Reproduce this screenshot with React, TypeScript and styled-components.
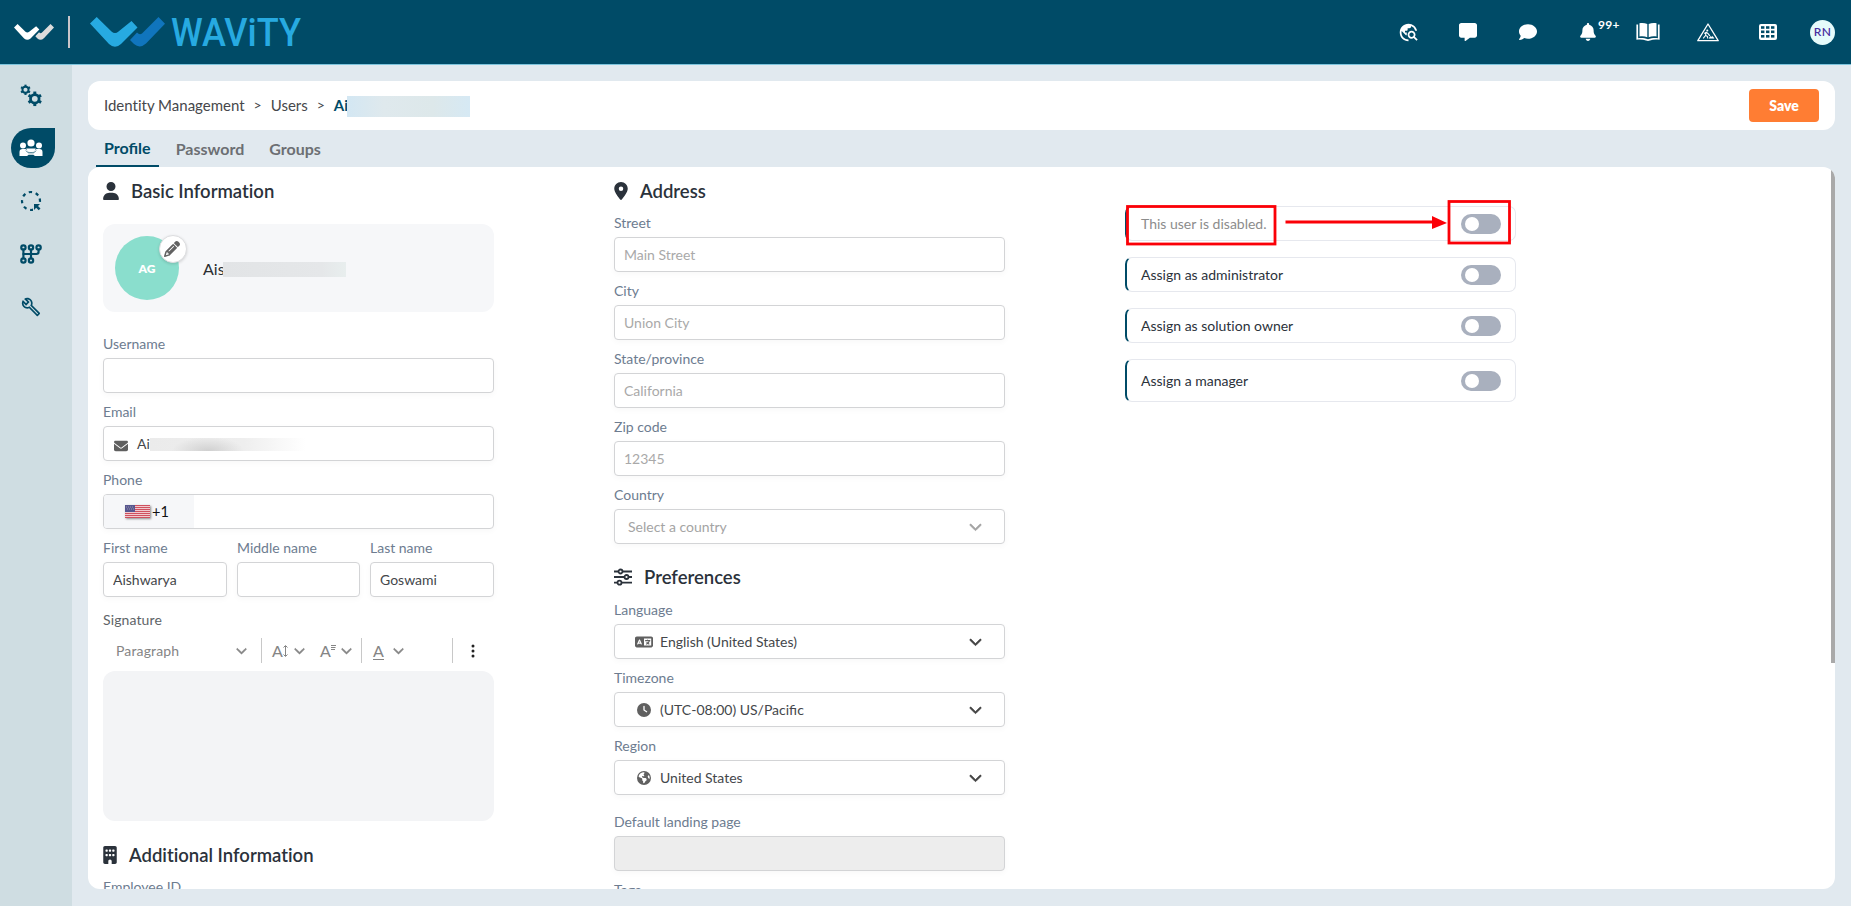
import React from "react";
import styled, { createGlobalStyle } from "styled-components";
import {
  FaBell,
  FaBuilding,
  FaChevronDown,
  FaClock,
  FaComment,
  FaEarthAmericas,
  FaEnvelope,
  FaLanguage,
  FaLocationDot,
  FaMessage,
  FaPencil,
  FaUser,
} from "react-icons/fa6";
import { MdOutlineBuild, MdTravelExplore } from "react-icons/md";
import { TbManualGearbox } from "react-icons/tb";

const NAVY = "#004b67";

const GlobalStyle = createGlobalStyle`
  * { box-sizing: border-box; }
  html, body { margin: 0; padding: 0; overflow: hidden; }
  body, input { font-family: Lato, "Liberation Sans", sans-serif; }
  body { font-variant-ligatures: none; }
`;

const Page = styled.div`
  display: flex;
  flex-direction: column;
  width: 100vw;
  height: 906px;
  background: #e1e9ef;
  font-size: 14px;
  color: #2b323b;
`;

const Header = styled.header`
  display: flex;
  align-items: center;
  justify-content: space-between;
  height: 65px;
  flex: none;
  background: ${NAVY};
  border-bottom: 1px solid #7dc4dc;
  padding: 0 16px 0 14px;
`;

const Brand = styled.div`
  display: flex;
  align-items: center;
`;

const BrandDivider = styled.div`
  width: 2px;
  height: 32px;
  margin: 0 20px 0 14px;
  background: #c9c5c9;
`;

const HeaderIcons = styled.div`
  display: flex;
  align-items: center;
`;

const HeaderIcon = styled.div<{ $w: number }>`
  position: relative;
  display: flex;
  align-items: center;
  justify-content: center;
  width: ${(p) => p.$w}px;
  height: 40px;
  color: #fff;
`;

const Count = styled.span`
  position: absolute;
  left: 40px;
  top: 5px;
  font-size: 12px;
  line-height: 16px;
  font-weight: 700;
  letter-spacing: 0.3px;
`;

const UserBadge = styled.div`
  display: flex;
  align-items: center;
  justify-content: center;
  width: 25px;
  height: 25px;
  margin-left: 12px;
  padding-bottom: 1px;
  border-radius: 50%;
  background: #e6fbfb;
  color: #4a2fa0;
  font-size: 12px;
  font-weight: 600;
  letter-spacing: 0.3px;
`;

const Body = styled.div`
  display: flex;
  flex: 1;
  min-height: 0;
`;

const Sidebar = styled.nav`
  display: flex;
  flex-direction: column;
  align-items: flex-start;
  gap: 13px;
  width: 72px;
  padding: 10px 0 0 11px;
  background: #cfdde2;
`;

const SideItem = styled.div<{ $active?: boolean }>`
  display: flex;
  align-items: center;
  justify-content: center;
  width: 44px;
  height: 40px;
  padding-right: 4px;
  border-radius: 20px 0 20px 20px;
  color: ${(p) => (p.$active ? "#fff" : NAVY)};
  background: ${(p) => (p.$active ? NAVY : "transparent")};
`;

const Main = styled.main`
  display: flex;
  flex-direction: column;
  flex: 1;
  padding: 16px 16px 17px;
  min-width: 0;
`;

const TitleBar = styled.div`
  display: flex;
  align-items: center;
  justify-content: space-between;
  height: 49px;
  flex: none;
  padding: 0 16px;
  border-radius: 12px;
  background: #fff;
`;

const Crumbs = styled.div`
  display: flex;
  align-items: center;
  height: 22px;
  font-size: 15px;
  line-height: 20px;
  color: #46474b;
`;

const Crumb = styled.span<{ $current?: boolean }>`
  padding-bottom: 2px;
  color: ${(p) => (p.$current ? NAVY : "#46474b")};
  font-weight: ${(p) => (p.$current ? 700 : 400)};
`;

const CrumbSep = styled.span`
  padding: 0 9px 2px;
  font-size: 14px;
`;

const CrumbMask = styled.span`
  width: 123px;
  height: 21px;
  margin: 2px 0 0 -1px;
  background: linear-gradient(90deg, #d3e7f3, #dfe9ed 30%, #dde8ea 70%, #d6e9f4);
`;

const SaveButton = styled.button`
  width: 70px;
  height: 33px;
  border: 0;
  border-radius: 4px;
  padding: 0;
  background: #ff7d33;
  color: #fff;
  font: 800 14px Lato, sans-serif;
`;

const Tabs = styled.div`
  display: flex;
  height: 37px;
  flex: none;
  padding-left: 8px;
  font-variant-ligatures: normal;
`;

const Tab = styled.div<{ $active?: boolean }>`
  height: 37px;
  padding: ${(p) => (p.$active ? "7px 8px 0" : "8px 8px 0")};
  margin-right: 9px;
  border-bottom: 2px solid ${(p) => (p.$active ? NAVY : "transparent")};
  color: ${(p) => (p.$active ? NAVY : "#6c6f73")};
  font-size: 16px;
  line-height: 22px;
  font-weight: 700;
`;

const Panel = styled.section`
  display: flex;
  align-items: flex-start;
  flex: 1;
  min-height: 0;
  overflow: hidden;
  border-radius: 12px;
  background: #fff;
  padding-left: 15px;
`;

const Column = styled.div<{ $gap?: number }>`
  display: flex;
  flex-direction: column;
  flex: none;
  width: 391px;
  margin-right: ${(p) => p.$gap ?? 0}px;
`;

const ScrollThumb = styled.div`
  width: 4px;
  height: 496px;
  margin-left: auto;
  background: #a9a9a9;
`;

const HeadingRow = styled.h2<{ $h: number; $top?: number; $pt?: number }>`
  display: flex;
  align-items: center;
  gap: 12px;
  height: ${(p) => p.$h}px;
  margin: ${(p) => p.$top ?? 0}px 0 0;
  padding-top: ${(p) => p.$pt ?? 0}px;
  font-size: 18.5px;
  line-height: 22px;
  font-weight: 600;
  color: #2b323b;
`;

const HeadingIcon = styled.span<{ $w: number }>`
  display: flex;
  justify-content: center;
  width: ${(p) => p.$w}px;
  svg { flex: none; }
`;

const ProfileCard = styled.div`
  display: flex;
  align-items: center;
  height: 88px;
  margin: 20px 0 13px;
  padding-left: 12px;
  border-radius: 12px;
  background: #f6f7f9;
`;

const Avatar = styled.div`
  position: relative;
  display: flex;
  align-items: center;
  justify-content: center;
  width: 64px;
  height: 64px;
  margin-right: 24px;
  border-radius: 50%;
  background: #8adecd;
  color: #fff;
  font-size: 12px;
  font-weight: 800;
`;

const EditBadge = styled.div`
  position: absolute;
  left: 44px;
  top: -1px;
  display: flex;
  align-items: center;
  justify-content: center;
  width: 28px;
  height: 28px;
  border: 1px solid #dcdddf;
  border-radius: 50%;
  background: #fff;
  color: #626262;
  padding-right: 2px;
  box-shadow: 0 1px 3px rgba(0, 0, 0, 0.15);
`;

const PersonName = styled.span`
  font-size: 16px;
  color: #2c2e31;
`;

const NameMask = styled.span`
  width: 123px;
  height: 15px;
  margin: 2px 0 0 -2px;
  z-index: 1;
  background: linear-gradient(90deg, #e2e4e6, #e5e7e9 80%, #e8eeee);
`;

const FieldBlock = styled.div<{ $top?: number }>`
  display: flex;
  flex-direction: column;
  flex: 1;
  min-width: 0;
  margin-top: ${(p) => p.$top ?? 0}px;
  padding-top: 10px;
`;

const Label = styled.label<{ $dark?: boolean }>`
  height: 18px;
  margin-bottom: 5px;
  line-height: 18px;
  letter-spacing: ${(p) => (p.$dark ? 0.12 : 0)}px;
  color: ${(p) => (p.$dark ? "#606468" : "#6d7c90")};
`;

const Control = styled.div<{ $disabled?: boolean; $pad?: number }>`
  display: flex;
  align-items: center;
  height: 35px;
  overflow: hidden;
  padding: 0 ${(p) => (p.$pad !== undefined ? 22 : 9)}px 0 ${(p) => p.$pad ?? 9}px;
  border: 1px solid #d3d4d6;
  border-radius: 4px;
  background: ${(p) => (p.$disabled ? "#ededed" : "#fff")};
  box-shadow: 0 2px 6px rgba(0, 0, 0, 0.03);
  color: #44474b;
`;

const Input = styled.input`
  width: 100%;
  border: 0;
  outline: 0;
  padding: 0;
  background: transparent;
  font-size: 14px;
  color: #44474b;
  &::placeholder { color: #a9a9a9; opacity: 1; }
`;

const SelectIcon = styled.span`
  display: flex;
  justify-content: center;
  width: 20px;
  margin-right: 6px;
  color: #606060;
`;

const SelectValue = styled.span<{ $muted?: boolean }>`
  flex: 1;
  padding-bottom: 1px;
  font-variant-ligatures: normal;
  color: ${(p) => (p.$muted ? "#a4a4a4" : "#44474b")};
`;

const Chevron = styled(FaChevronDown)<{ $muted?: boolean }>`
  width: 13px;
  height: 13px;
  margin-bottom: 1px;
  stroke-width: 24px;
  color: ${(p) => (p.$muted ? "#a4a4a4" : "#444")};
`;

const EmailIcon = styled.span`
  display: flex;
  padding: 5px 9px 0 1px;
  color: #5f5f5f;
`;

const EmailMask = styled.span`
  width: 156px;
  height: 13px;
  margin-top: 2px;
  background: radial-gradient(ellipse 36px 14px at 58px 13px, #d0d0d0, transparent),
    linear-gradient(90deg, #ebebeb, #eeeeee 60%, #fff);
`;

const DialCode = styled.div`
  display: flex;
  align-items: center;
  gap: 2px;
  width: 90px;
  height: 33px;
  padding-left: 21px;
  background: #f6f7f9;
  color: #111;
`;

const DialNumber = styled.span`
  padding-bottom: 1px;
  font-size: 14.5px;
`;

const Flag = styled.svg`
  display: block;
  box-shadow: 1px 1px 2px rgba(0, 0, 0, 0.5);
  opacity: 0.85;
`;

const NameRow = styled.div`
  display: grid;
  grid-template-columns: 124px 123px 124px;
  gap: 10px;
`;

const Toolbar = styled.div`
  display: flex;
  align-items: center;
  height: 25px;
  margin: 4px 0 8px;
  padding-left: 13px;
  color: #858585;
`;

const ToolDivider = styled.div<{ $l: number; $r: number }>`
  width: 1px;
  height: 25px;
  margin: 0 ${(p) => p.$r}px 0 ${(p) => p.$l}px;
  background: #c8c8c8;
`;

const ToolText = styled.span`
  width: 120px;
  letter-spacing: 0.15px;
`;

const ToolGlyph = styled.span<{ $w: number }>`
  position: relative;
  display: flex;
  align-items: center;
  width: ${(p) => p.$w}px;
  height: 17px;
  font-size: 16px;
  line-height: 17px;
`;

const Underline = styled.span`
  position: absolute;
  left: 0;
  bottom: -1px;
  width: 11px;
  height: 1px;
  background: #858585;
`;

const ToolChevron = styled(FaChevronDown)<{ $r: number }>`
  width: 11px;
  height: 11px;
  stroke-width: 30px;
  margin-right: ${(p) => p.$r}px;
`;

const SignatureArea = styled.div`
  height: 150px;
  border-radius: 12px;
  background: #f3f4f6;
`;

const OptionList = styled.div`
  position: relative;
  display: flex;
  flex-direction: column;
  gap: 16px;
  padding-top: 39px;
`;

const Option = styled.div<{ $h: number; $muted?: boolean }>`
  display: flex;
  align-items: center;
  justify-content: space-between;
  height: ${(p) => p.$h}px;
  padding: 0 14px;
  border: 1px solid #e6e8ee;
  border-left: 2px solid ${NAVY};
  border-radius: 7px;
  color: ${(p) => (p.$muted ? "#8c8c8c" : "#2b323b")};
`;

const Toggle = styled.span`
  display: flex;
  align-items: center;
  width: 40px;
  height: 20px;
  padding-left: 4px;
  border-radius: 10px;
  background: #a9b0be;
  &::after {
    content: "";
    width: 14px;
    height: 14px;
    border-radius: 50%;
    background: #fff;
  }
`;

const Callout = styled.svg`
  position: absolute;
  left: -5px;
  top: 28px;
`;

const Gear = ({ cx, cy, r }: { cx: number; cy: number; r: number }) => (
  <g transform={`translate(${cx} ${cy})`}>
    {[0, 60, 120, 180, 240, 300].map((a) => (
      <rect key={a} x={-r * 0.27} y={-r * 1.32} width={r * 0.54} height={r * 0.5} fill={NAVY} transform={`rotate(${a})`} />
    ))}
    <circle r={r * 0.78} fill="none" stroke={NAVY} strokeWidth={r * 0.5} />
  </g>
);

const GearsIcon = () => (
  <svg width="24" height="24" viewBox="0 0 24 24">
    <Gear cx={6.500} cy={6.800} r={3.900} />
    <Gear cx={15.800} cy={15.800} r={5.500} />
  </svg>
);

const PeopleIcon = () => (
  <svg width="24" height="18" viewBox="0 0 24 18" fill="#fff">
    <circle cx="12" cy="4" r="3.600" />
    <circle cx="4" cy="6.500" r="3" />
    <circle cx="20" cy="6.500" r="3" />
    <path d="M.5 17v-4c0-2 1-3 3-3h3l5.500 4L17.500 10h3c2 0 3 1 3 3v4H17c-1 0-2-.6-2.600-1.300H9.600C9 16.400 8 17 7 17z" />
    <path d="M7.200 9.500h9.600l-1 2.300L12 14l-3.800-2.200z" />
    <path d="M7 11.600l2.200 2.200h5.600L17 11.600" fill="none" stroke={NAVY} strokeWidth=".8" />
  </svg>
);

const LassoIcon = () => (
  <svg width="24" height="24" viewBox="0 0 24 24" fill="none" stroke={NAVY} strokeWidth="2.200">
    <circle cx="12" cy="12" r="9" strokeDasharray="3.300 3.770" transform="rotate(-16 12 12)" />
    <path d="M14 14h8v8h-8z" fill="#cfdde2" stroke="none" />
    <path d="M15 15h6l-2 2 2.500 2.500-1.800 1.800-2.500-2.500L15 21z" fill={NAVY} stroke="none" />
  </svg>
);

const BookIcon = () => (
  <svg width="24" height="20" viewBox="0 0 24 20" fill="#fff">
    <path d="M3.500 1.200C6.500.7 9 1 11.300 2v13.200c-2.300-.9-4.800-1.100-7.800-.7zM20.500 1.200c-3-.5-5.500-.2-7.800.8v13.200c2.300-.9 4.800-1.100 7.800-.7z" />
    <path d="M.4 2.500h1.700v13.700c3.400-.4 6.500-.2 9.900 1.100 3.400-1.300 6.500-1.500 9.900-1.100V2.500h1.700v15.300c-3.600-.6-6.800-.4-9.600.8-1.400.6-2.600.6-4 0-2.800-1.200-6-1.400-9.600-.8z" />
  </svg>
);

const WorkIcon = () => (
  <svg width="22" height="19" viewBox="0 0 22 19" fill="none" stroke="#fff" strokeWidth="1.300" strokeLinejoin="round">
    <path d="M11 1L21.200 17.700H.8z" />
    <circle cx="10.300" cy="7.600" r="1" fill="#fff" stroke="none" />
    <path d="M7.300 10.500l2-1.200 2 1.600 1.500 2M9 10l-.5 2.500-2.300 2.800M8.800 12.500l1.800 1v2" strokeWidth="1.100" />
    <path d="M12 15.300l1.500-2 1 .8 1-.8 1.500 2z" fill="#fff" strokeWidth=".5" />
  </svg>
);

const GridIcon = () => (
  <svg width="18" height="16" viewBox="0 0 18 16">
    <rect width="18" height="16" rx="2" fill="#fff" />
    {[2, 7, 12].map((x) =>
      [2.200, 6.500, 11].map((y) => <rect key={`${x}-${y}`} x={x} y={y} width="3.400" height="2.600" fill={NAVY} />),
    )}
  </svg>
);

const SlidersIcon = () => (
  <svg width="18" height="18" viewBox="0 0 18 18" fill="#fff" stroke="#2b323b" strokeWidth="1.800">
    <path d="M0 3.500h18M0 9h18M0 14.700h18" />
    <circle cx="6.500" cy="3.500" r="2" />
    <circle cx="12.500" cy="9" r="2" />
    <circle cx="5.500" cy="14.700" r="2" />
  </svg>
);

const MarkIcon = ({ width, height, left, right }: { width: number; height: number; left: string; right: string }) => (
  <svg width={width} height={height} viewBox="0 0 75 30">
    <path d="M40 23L47 15.500Q49.500 18.500 52 16.500L68.500 0 75 6.700 56 26.500Q50 32 44 27z" fill={right} />
    <path d="M0 6.500L6.700 0 21.500 14.500q3.500 3 7 0L41.500 4l6 6.500L31 27q-6 5.500-12 0z" fill={left} />
  </svg>
);

const Heading = ({
  icon,
  iconWidth,
  height,
  top,
  inset,
  children,
}: {
  icon: React.ReactNode;
  iconWidth: number;
  height: number;
  top?: number;
  inset?: number;
  children: React.ReactNode;
}) => (
  <HeadingRow $h={height} $top={top} $pt={inset}>
    <HeadingIcon $w={iconWidth}>{icon}</HeadingIcon>
    <span>{children}</span>
  </HeadingRow>
);

interface FieldProps {
  label: string;
  value?: string;
  placeholder?: string;
  disabled?: boolean;
  top?: number;
}

const TextField = ({ label, value, placeholder, disabled, top }: FieldProps) => (
  <FieldBlock $top={top}>
    <Label>{label}</Label>
    <Control $disabled={disabled}>
      <Input defaultValue={value} placeholder={placeholder} disabled={disabled} />
    </Control>
  </FieldBlock>
);

const SelectField = ({ label, value, icon }: { label: string; value: string; icon?: React.ReactNode }) => (
  <FieldBlock>
    <Label>{label}</Label>
    <Control $pad={icon ? 19 : 13}>
      {icon && <SelectIcon>{icon}</SelectIcon>}
      <SelectValue $muted={!icon}>{value}</SelectValue>
      <Chevron $muted={!icon} stroke="currentColor" />
    </Control>
  </FieldBlock>
);

const options = [
  { text: "This user is disabled.", h: 35, muted: true },
  { text: "Assign as administrator", h: 35 },
  { text: "Assign as solution owner", h: 35 },
  { text: "Assign a manager", h: 43 },
];

export default function App() {
  return (
    <Page>
      <GlobalStyle />
      <Header>
        <Brand>
          <MarkIcon width={40} height={16} left="#fff" right="#dcdcdc" />
          <BrandDivider />
          <svg width="230" height="48" viewBox="0 -8 230 48">
            <g transform="translate(0 1)">
              <MarkIcon width={75} height={30} left="#27aae1" right="#1075bd" />
            </g>
            <text
              x="81"
              y="30"
              textLength="130"
              lengthAdjust="spacingAndGlyphs"
              fontFamily="Roboto, sans-serif"
              fontWeight="500"
              fontSize="38.500"
              fill="#27aae1"
            >
              WAViTY
            </text>
          </svg>
        </Brand>
        <HeaderIcons>
          <HeaderIcon $w={60}><MdTravelExplore size={21} /></HeaderIcon>
          <HeaderIcon $w={60}><FaMessage size={18} /></HeaderIcon>
          <HeaderIcon $w={60}><FaComment size={18} /></HeaderIcon>
          <HeaderIcon $w={60}>
            <FaBell size={18} />
            <Count>99+</Count>
          </HeaderIcon>
          <HeaderIcon $w={60}><BookIcon /></HeaderIcon>
          <HeaderIcon $w={60}><WorkIcon /></HeaderIcon>
          <HeaderIcon $w={60}><GridIcon /></HeaderIcon>
          <HeaderIcon $w={37}><UserBadge>RN</UserBadge></HeaderIcon>
        </HeaderIcons>
      </Header>
      <Body>
        <Sidebar>
          <SideItem><GearsIcon /></SideItem>
          <SideItem $active><PeopleIcon /></SideItem>
          <SideItem><LassoIcon /></SideItem>
          <SideItem><TbManualGearbox size={26} /></SideItem>
          <SideItem><MdOutlineBuild size={20} /></SideItem>
        </Sidebar>
        <Main>
          <TitleBar>
            <Crumbs>
              <Crumb>Identity Management</Crumb>
              <CrumbSep>&gt;</CrumbSep>
              <Crumb>Users</Crumb>
              <CrumbSep>&gt;</CrumbSep>
              <Crumb $current>Ai</Crumb>
              <CrumbMask />
            </Crumbs>
            <SaveButton>Save</SaveButton>
          </TitleBar>
          <Tabs>
            <Tab $active>Profile</Tab>
            <Tab>Password</Tab>
            <Tab>Groups</Tab>
          </Tabs>
          <Panel>
            <Column $gap={120}>
              <Heading icon={<FaUser size={18} />} iconWidth={16} height={37} inset={10}>
                Basic Information
              </Heading>
              <ProfileCard>
                <Avatar>
                  AG
                  <EditBadge><FaPencil size={16} /></EditBadge>
                </Avatar>
                <PersonName>Ais</PersonName>
                <NameMask />
              </ProfileCard>
              <TextField label="Username" />
              <FieldBlock>
                <Label>Email</Label>
                <Control>
                  <EmailIcon><FaEnvelope size={14} /></EmailIcon>
                  <span>Ai</span>
                  <EmailMask />
                </Control>
              </FieldBlock>
              <FieldBlock>
                <Label>Phone</Label>
                <Control $pad={0}>
                  <DialCode>
                    <Flag width="25" height="13" viewBox="0 0 25 13">
                      <rect width="25" height="13" fill="#fff" />
                      {[0, 2, 4, 6, 8, 10, 12].map((y) => (
                        <rect key={y} y={y} width="25" height="1.300" fill="#c93445" />
                      ))}
                      <rect width="10" height="7" fill="#3c3b7e" />
                      <path d="M1 2h8M2 4h8" stroke="#aaa" strokeWidth=".7" strokeDasharray="1 1" />
                    </Flag>
                    <DialNumber>+1</DialNumber>
                  </DialCode>
                </Control>
              </FieldBlock>
              <NameRow>
                <TextField label="First name" value="Aishwarya" />
                <TextField label="Middle name" />
                <TextField label="Last name" value="Goswami" />
              </NameRow>
              <FieldBlock $top={4}>
                <Label $dark>Signature</Label>
              </FieldBlock>
              <Toolbar>
                <ToolText>Paragraph</ToolText>
                <ToolChevron $r={0} stroke="currentColor" />
                <ToolDivider $l={14} $r={10} />
                <ToolGlyph $w={22}>
                  A
                  <svg width="5" height="12" viewBox="0 0 5 12" fill="none" stroke="currentColor">
                    <path d="M2.500 1v10M.5 2.500l2-2 2 2M.5 9.500l2 2 2-2" />
                  </svg>
                </ToolGlyph>
                <ToolChevron $r={15} stroke="currentColor" />
                <ToolGlyph $w={21}>
                  A
                  <svg width="5" height="12" viewBox="0 0 5 12" stroke="currentColor">
                    <path d="M0 .5h5M0 2.500h4.500M0 4.500h4" />
                  </svg>
                </ToolGlyph>
                <ToolChevron $r={0} stroke="currentColor" />
                <ToolDivider $l={9} $r={11} />
                <ToolGlyph $w={20}>
                  A
                  <Underline />
                </ToolGlyph>
                <ToolChevron $r={0} stroke="currentColor" />
                <ToolDivider $l={48} $r={18} />
                <svg width="4" height="14" viewBox="0 0 4 14" fill="#222">
                  <circle cx="2" cy="2" r="1.500" />
                  <circle cx="2" cy="7" r="1.500" />
                  <circle cx="2" cy="12" r="1.500" />
                </svg>
              </Toolbar>
              <SignatureArea />
              <Heading icon={<FaBuilding size={18} />} iconWidth={14} height={27} top={20}>
                Additional Information
              </Heading>
              <TextField label="Employee ID" />
            </Column>
            <Column $gap={120}>
              <Heading icon={<FaLocationDot size={18} />} iconWidth={14} height={37} inset={10}>
                Address
              </Heading>
              <TextField label="Street" placeholder="Main Street" />
              <TextField label="City" placeholder="Union City" />
              <TextField label="State/province" placeholder="California" />
              <TextField label="Zip code" placeholder="12345" />
              <SelectField label="Country" value="Select a country" />
              <Heading icon={<SlidersIcon />} iconWidth={18} height={28} top={19}>
                Preferences
              </Heading>
              <SelectField label="Language" value="English (United States)" icon={<FaLanguage size={18} />} />
              <SelectField label="Timezone" value="(UTC-08:00) US/Pacific" icon={<FaClock size={14} />} />
              <SelectField label="Region" value="United States" icon={<FaEarthAmericas size={14} />} />
              <TextField label="Default landing page" top={8} disabled />
              <TextField label="Tags" />
            </Column>
            <Column>
              <OptionList>
                {options.map((o) => (
                  <Option key={o.text} $h={o.h} $muted={o.muted}>
                    <span>{o.text}</span>
                    <Toggle />
                  </Option>
                ))}
                <Callout width="400" height="60" viewBox="0 0 400 60" fill="none" stroke="#fb0007" strokeWidth="2.800">
                  <rect x="7.500" y="11.500" width="147.500" height="37.500" />
                  <rect x="329" y="6.500" width="60.500" height="41.500" />
                  <path d="M165.500 27H313" />
                  <path d="M312 21l15 7-15 6z" fill="#fb0007" stroke="none" />
                </Callout>
              </OptionList>
            </Column>
            <ScrollThumb />
          </Panel>
        </Main>
      </Body>
    </Page>
  );
}
